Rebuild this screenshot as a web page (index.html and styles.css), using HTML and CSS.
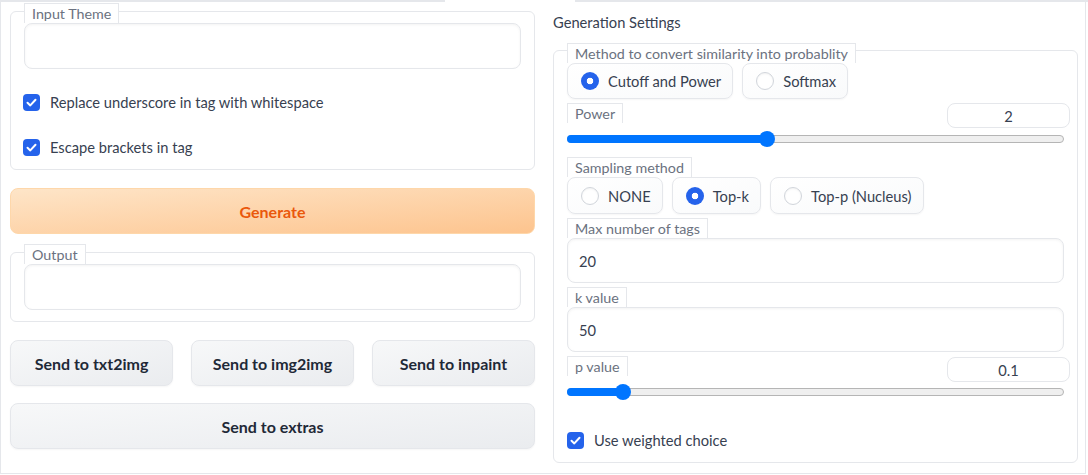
FILE: index.html
```html
<!DOCTYPE html>
<html>
<head>
<meta charset="utf-8">
<link rel="stylesheet" href="styles.css">
</head>
<body>
<div class="topstrip"><div class="seg seg-left"></div><div class="seg-gap"></div><div class="seg seg-right"></div></div>
<div class="frame">
  <div class="col col-left">
    <div class="block block-input">
      <span class="label">Input Theme</span>
      <div class="textarea"></div>
      <div class="check check-a">
        <span class="cbox"><svg width="17" height="17" viewBox="0 0 17 17"><path d="M4.5 8.8 L7.3 11.4 L12.5 5.8" fill="none" stroke="#fff" stroke-width="2" stroke-linecap="round" stroke-linejoin="round"/></svg></span>
        <span class="check-text">Replace underscore in tag with whitespace</span>
      </div>
      <div class="check check-b">
        <span class="cbox"><svg width="17" height="17" viewBox="0 0 17 17"><path d="M4.5 8.8 L7.3 11.4 L12.5 5.8" fill="none" stroke="#fff" stroke-width="2" stroke-linecap="round" stroke-linejoin="round"/></svg></span>
        <span class="check-text">Escape brackets in tag</span>
      </div>
    </div>
    <button class="btn btn-primary">Generate</button>
    <div class="block block-output">
      <span class="label">Output</span>
      <div class="textarea"></div>
    </div>
    <div class="btn-row">
      <button class="btn btn-secondary">Send to txt2img</button>
      <button class="btn btn-secondary">Send to img2img</button>
      <button class="btn btn-secondary">Send to inpaint</button>
    </div>
    <button class="btn btn-secondary btn-wide">Send to extras</button>
  </div>

  <div class="col col-right">
    <div class="section-title">Generation Settings</div>
    <div class="group">
      <div class="item item-radio">
        <span class="label label-group">Method to convert similarity into probablity</span>
        <div class="radios">
          <div class="radio"><span class="rdot on"></span><span>Cutoff and Power</span></div>
          <div class="radio"><span class="rdot"></span><span>Softmax</span></div>
        </div>
      </div>
      <div class="item item-slider">
        <div class="slider-head">
          <span class="label label-item">Power</span>
          <div class="num">2</div>
        </div>
        <div class="track" style="--v:0.4"><div class="fill"></div><div class="thumb"></div></div>
      </div>
      <div class="item item-radio">
        <span class="label label-item">Sampling method</span>
        <div class="radios radios-tall">
          <div class="radio"><span class="rdot"></span><span>NONE</span></div>
          <div class="radio"><span class="rdot on"></span><span>Top-k</span></div>
          <div class="radio"><span class="rdot"></span><span>Top-p (Nucleus)</span></div>
        </div>
      </div>
      <div class="item">
        <span class="label label-item">Max number of tags</span>
        <div class="field">20</div>
      </div>
      <div class="item">
        <span class="label label-item">k value</span>
        <div class="field">50</div>
      </div>
      <div class="item item-slider">
        <div class="slider-head">
          <span class="label label-item">p value</span>
          <div class="num num-p">0.1</div>
        </div>
        <div class="track" style="--v:0.1"><div class="fill"></div><div class="thumb"></div></div>
      </div>
      <div class="check check-c">
        <span class="cbox"><svg width="17" height="17" viewBox="0 0 17 17"><path d="M4.5 8.8 L7.3 11.4 L12.5 5.8" fill="none" stroke="#fff" stroke-width="2" stroke-linecap="round" stroke-linejoin="round"/></svg></span>
        <span class="check-text">Use weighted choice</span>
      </div>
    </div>
  </div>
</div>
</body>
</html>
```

FILE: styles.css
```css
* { box-sizing: border-box; margin: 0; padding: 0; }
html, body { width: 1088px; height: 475px; overflow: hidden; background: #fff; }
body { font-family: "Lato", "Noto Sans", sans-serif; font-size: 14.7px; color: #374151; }

.topstrip { display: flex; height: 2px; }
.seg { background: #e5e7eb; height: 2px; }
.seg-left { width: 445px; }
.seg-gap { width: 130px; }
.seg-right { flex: 1; }

.frame {
  display: flex;
  gap: 18px;
  width: 1086px;
  height: 472px;
  border: 1px solid #e5e7eb;
  border-top: none;
  padding-left: 9px;
}
.col-left { width: 525px; display: flex; flex-direction: column; }
.col-right { width: 525px; display: flex; flex-direction: column; }

.block { border: 1px solid #e5e7eb; border-radius: 6px; padding: 0 13px; }
.block-input { margin-top: 9px; padding-bottom: 13px; }
.block-output { margin-top: 18px; padding-bottom: 11px; }

.label {
  display: block;
  width: fit-content;
  margin-top: -9px;
  border: 1px solid #e5e7eb;
  border-bottom: none;
  background: #fff;
  padding: 0 7px;
  line-height: 19px;
  font-size: 14.3px;
  color: #6b7280;
  position: relative;
}
.label-group { margin-top: -8px; }
.label-item { margin-top: 0; }

.textarea {
  height: 46px;
  border: 1px solid #e5e7eb;
  border-radius: 8px;
  box-shadow: inset 0 1px 3px rgba(0, 0, 0, 0.05);
  background: #fff;
}

.check { display: flex; align-items: center; gap: 10px; height: 17px; }
.check-a { margin-top: 25px; margin-left: -1px; }
.check-b { margin-top: 28px; margin-left: -1px; }
.check-c { margin-top: 26px; }
.cbox {
  width: 17px; height: 17px; border-radius: 4px; background: #2563eb;
  display: flex; align-items: center; justify-content: center; flex: none;
}
.cbox svg { display: block; }
.check-text { font-size: 14.7px; line-height: 17px; color: #374151; }

.btn {
  display: flex; align-items: center; justify-content: center;
  height: 46px; border-radius: 8px; font-family: inherit;
  font-size: 16px; font-weight: 700; cursor: pointer;
}
.btn-primary {
  margin-top: 18px;
  border: 1px solid #fed7aa;
  background: linear-gradient(to bottom right, #fee5c8, #fdc48e);
  color: #ea580c;
}
.btn-secondary {
  border: 1px solid #e5e7eb;
  background: linear-gradient(to bottom right, #f7f8f9, #eaecef);
  color: #1f2937;
  box-shadow: 0 1px 2px rgba(0,0,0,0.04);
}
.btn-row { display: flex; gap: 18px; margin-top: 18px; }
.btn-row .btn { flex: 1; }
.btn-wide { margin-top: 17px; }

.section-title { margin-top: 10px; line-height: 20px; font-size: 14.7px; color: #374151; }
.group {
  margin-top: 18px;
  border: 1px solid #e5e7eb;
  border-radius: 6px;
  padding: 0 13px 13px;
}
.item + .item { margin-top: 4px; }

.radios { display: flex; gap: 9px; height: 36px; }
.radios-tall { height: 37px; }
.radio {
  display: flex; align-items: center; gap: 9px;
  padding: 0 11px 0 13px;
  border: 1px solid #e5e7eb; border-radius: 8px;
  background: linear-gradient(to bottom right, #ffffff, #f9fafb);
  box-shadow: 0 1px 2px rgba(0,0,0,0.04);
  font-size: 14.7px; color: #374151;
}
.rdot {
  width: 18px; height: 18px; border-radius: 50%;
  border: 1px solid #d1d5db; background: #fff; flex: none;
  box-shadow: inset 0 1px 2px rgba(0,0,0,0.05);
}
.rdot.on {
  border: none; background: #2563eb;
  background-image: radial-gradient(circle, #fff 0 3px, transparent 3.6px);
  box-shadow: none;
}

.item-slider { padding-bottom: 10px; }
.slider-head { display: flex; justify-content: space-between; align-items: flex-start; height: 25px; }
.num {
  width: 123px; height: 25px; margin-right: -6px;
  border: 1px solid #e5e7eb; border-radius: 8px;
  display: flex; align-items: center; justify-content: center;
  font-size: 14.7px; color: #374151;
}
.num-p { margin-top: 1px; }
.track {
  position: relative;
  margin-top: 7px;
  height: 8px;
  border: 1px solid #b5b5b5;
  border-radius: 4px;
  background: #efefef;
}
.fill {
  position: absolute; left: -1px; top: -1px; bottom: -1px;
  width: calc(var(--v) * (100% - 16px) + 9px);
  background: #0075ff; border-radius: 4px;
}
.thumb {
  position: absolute; top: -5px;
  left: calc(var(--v) * (100% - 16px) - 1px);
  width: 16px; height: 16px; border-radius: 50%; background: #0075ff;
}

.field {
  height: 45px;
  border: 1px solid #e5e7eb; border-radius: 8px;
  box-shadow: inset 0 1px 3px rgba(0,0,0,0.05);
  display: flex; align-items: center;
  padding-left: 11px;
  font-size: 14.7px; color: #374151;
}
```
